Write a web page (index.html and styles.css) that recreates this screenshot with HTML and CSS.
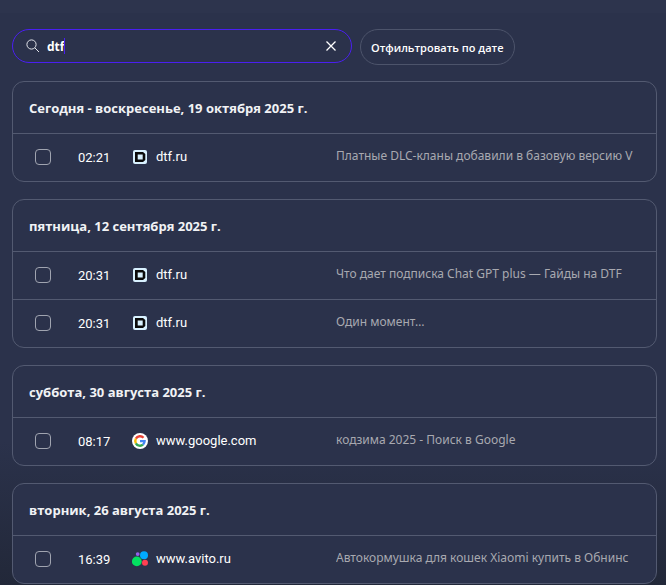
FILE: index.html
```html
<!DOCTYPE html>
<html lang="ru">
<head>
  <meta charset="utf-8">
  <meta name="viewport" content="width=device-width, initial-scale=1">
  <title>История</title>
  <link rel="stylesheet" href="styles.css">
</head>
<body>
<svg class="sprite" aria-hidden="true">
  <symbol id="dtf" viewBox="0 0 16 16">
    <rect x="1" y="1" width="14" height="14" rx="2" fill="#d8f1ff"/>
    <path fill="#0a0a0a" fill-rule="evenodd" d="M3 3h8L13.300 5v6L11 13H3zM5.700 5.500v5h5v-5z"/>
  </symbol>
  <symbol id="google" viewBox="0 0 16 16">
    <circle cx="8" cy="8" r="8" fill="#fff"/>
    <g fill="none" stroke-width="2.400">
      <path stroke="#ea4335" d="M3.900 5.700A4.700 4.700 0 0 1 11.500 4.800"/>
      <path stroke="#fbbc05" d="M3.900 5.700A4.700 4.700 0 0 0 3.900 10.300"/>
      <path stroke="#34a853" d="M3.900 10.300A4.700 4.700 0 0 0 11 11.600"/>
      <path stroke="#4285f4" d="M11 11.600A4.700 4.700 0 0 0 12.600 8.100H8"/>
    </g>
  </symbol>
  <symbol id="avito" viewBox="0 0 16 16">
    <circle cx="4.800" cy="10.400" r="4.900" fill="#04e061"/>
    <circle cx="12" cy="4.300" r="4" fill="#00aaff"/>
    <circle cx="13" cy="11.800" r="3" fill="#ff4053"/>
    <circle cx="5.700" cy="3.100" r="1.900" fill="#965eeb"/>
  </symbol>
</svg>

<form class="toolbar">
  <div class="search">
    <svg class="search-icon" viewBox="0 0 14 14" aria-hidden="true">
      <circle cx="5.500" cy="5.500" r="4.600"/>
      <path d="M8.800 8.800L13 13"/>
    </svg>
    <input class="search-input" type="text" value="dtf" aria-label="Поиск в истории">
    <span class="caret"></span>
    <button class="clear" type="button" aria-label="Очистить">
      <svg viewBox="0 0 10 10"><path d="M0.500 0.500l9 9M9.500 0.500l-9 9"/></svg>
    </button>
  </div>
  <button class="filter" type="button">Отфильтровать по дате</button>
</form>

<main class="history">
  <section class="day">
    <h2>Сегодня - воскресенье, 19 октября 2025 г.</h2>
    <div class="row">
      <input type="checkbox" id="v1">
      <label class="time" for="v1">02:21</label>
      <svg class="favicon"><use href="#dtf"/></svg>
      <a class="site" href="#">dtf.ru</a>
      <span class="title">Платные DLC-кланы добавили в базовую версию V</span>
    </div>
  </section>

  <section class="day">
    <h2>пятница, 12 сентября 2025 г.</h2>
    <div class="row">
      <input type="checkbox" id="v2">
      <label class="time" for="v2">20:31</label>
      <svg class="favicon"><use href="#dtf"/></svg>
      <a class="site" href="#">dtf.ru</a>
      <span class="title">Что дает подписка Chat GPT plus — Гайды на DTF</span>
    </div>
    <div class="row">
      <input type="checkbox" id="v3">
      <label class="time" for="v3">20:31</label>
      <svg class="favicon"><use href="#dtf"/></svg>
      <a class="site" href="#">dtf.ru</a>
      <span class="title">Один момент…</span>
    </div>
  </section>

  <section class="day">
    <h2>суббота, 30 августа 2025 г.</h2>
    <div class="row">
      <input type="checkbox" id="v4">
      <label class="time" for="v4">08:17</label>
      <svg class="favicon"><use href="#google"/></svg>
      <a class="site" href="#">www.google.com</a>
      <span class="title">кодзима 2025 - Поиск в Google</span>
    </div>
  </section>

  <section class="day">
    <h2>вторник, 26 августа 2025 г.</h2>
    <div class="row">
      <input type="checkbox" id="v5">
      <label class="time" for="v5">16:39</label>
      <svg class="favicon"><use href="#avito"/></svg>
      <a class="site" href="#">www.avito.ru</a>
      <span class="title">Автокормушка для кошек Xiaomi купить в Обнинс</span>
    </div>
  </section>
</main>
</body>
</html>
```
FILE: styles.css
```css
* {
  box-sizing: border-box;
}

html {
  background: #2b324b;
}

body {
  margin: 0;
  padding: 16px 9px 1px 12px;
  border-top: 13px solid #2d344d;
  background: linear-gradient(#2b324b 75%, #222839);
  color: #fff;
  font-family: "Segoe UI", "Open Sans", sans-serif;
  font-size: 13px;
  line-height: 20px;
}

.sprite {
  display: none;
}

button, input {
  font: inherit;
  color: inherit;
}

.toolbar {
  display: flex;
  align-items: flex-start;
  gap: 8px;
  margin: 0 0 16px;
}

/* search */
.search {
  display: flex;
  align-items: center;
  flex: 0 1 340px;
  height: 34px;
  padding: 0 15px 0 13px;
  border: 1px solid #4a1ff0;
  border-radius: 17px;
}

.search-icon {
  width: 14px;
  height: 14px;
  margin-right: 7px;
  fill: none;
  stroke: #e4e6ec;
}

.search-input {
  field-sizing: content;
  padding: 2px 0 0;
  border: 0;
  outline: 0;
  background: none;
  font-size: 12px;
  font-weight: 700;
}

.caret {
  flex: none;
  width: 1px;
  height: 16px;
  background: #4a1ff0;
}

.clear {
  display: flex;
  margin-left: auto;
  padding: 0;
  border: 0;
  background: none;
}

.clear svg {
  width: 10px;
  height: 10px;
  fill: none;
  stroke: #fff;
  stroke-width: 1.3;
}

.filter {
  height: 36px;
  padding: 2px 10px 0;
  border: 1px solid #4d546b;
  border-radius: 18px;
  background: none;
  font-size: 11px;
  font-weight: 600;
  white-space: nowrap;
}

/* history */
.history {
  display: grid;
  gap: 17px;
}

.day {
  min-width: 0;
  border: 1px solid #535a71;
  border-radius: 12px;
  background: #2b324b;
}

.day h2 {
  margin: 0;
  padding: 16px 16px 15px;
  color: #f1f2f5;
  font-size: 13px;
  font-weight: 700;
  line-height: 20px;
}

.row {
  display: grid;
  grid-template-columns: 43px 54px 24px 180px minmax(0, 1fr);
  align-items: center;
  height: 48px;
  padding: 0 18px 2px 22px;
  border-top: 1px solid #535a71;
  font-family: "Segoe UI", Roboto, sans-serif;
}

.row input {
  appearance: none;
  width: 16px;
  height: 16px;
  margin: 0;
  border: 1px solid #a0a4b0;
  border-radius: 4px;
}

.time {
  padding-top: 2px;
}

.favicon {
  width: 16px;
  height: 16px;
}

.site {
  color: inherit;
  text-decoration: none;
}

.title {
  padding-bottom: 2px;
  overflow: hidden;
  color: #a8a9b0;
  font-family: "Segoe UI", "Noto Sans", sans-serif;
  font-size: 12px;
  white-space: nowrap;
}
```
